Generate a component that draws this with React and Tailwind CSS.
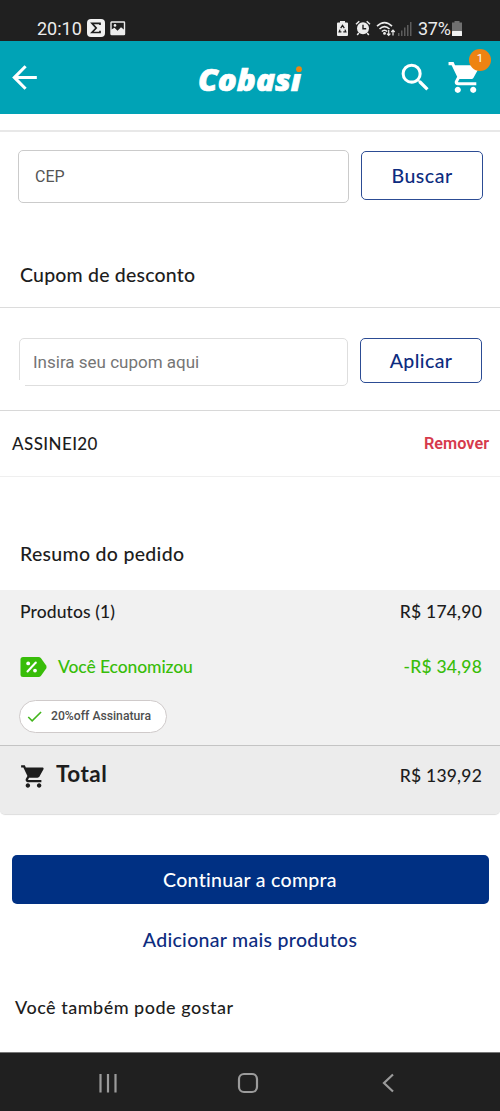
import React, { useState } from 'react';
import { MdArrowBack, MdCheck, MdSearch } from 'react-icons/md';

const inputClass = 'block w-full bg-transparent font-[Roboto,sans-serif] outline-none';
const outlineButton =
  'flex items-center justify-center rounded-[5px] border border-[#2c4c94] text-[19.5px] font-medium text-[#0d2c80]';

function CartIcon({ className }) {
  return (
    <svg className={className} viewBox="0 0 24 24" fill="currentColor">
      <path d="M7 18c-1.1 0-1.99.9-1.99 2S5.9 22 7 22s2-.9 2-2-.9-2-2-2zM1 2v2h2l3.6 7.59-1.35 2.45c-.16.28-.25.61-.25.96 0 1.1.9 2 2 2h12v-2H7.42c-.14 0-.25-.11-.25-.25l.03-.12.9-1.63h7.45c.75 0 1.41-.41 1.75-1.03l3.58-6.49c.08-.14.12-.31.12-.48 0-.55-.45-1-1-1H5.21l-.94-2H1zm16 16c-1.1 0-1.99.9-1.99 2s.89 2 1.99 2 2-.9 2-2-.9-2-2-2z" />
    </svg>
  );
}

function StatusBar() {
  return (
    <div className="flex h-[41px] items-end justify-between bg-[#202020] pr-9 pl-9 font-[Roboto,sans-serif] text-[#ececec]">
      <div className="flex h-[26px] items-center">
        <span className="w-[45px] pt-0.5 pl-px text-[18px] leading-none">20:10</span>
        <svg className="mb-px ml-1.5" width="18" height="18" viewBox="0 0 18 18">
          <rect width="18" height="18" rx="4" fill="#f2f2f2" />
          <path d="M13 6V4.3H5L9.2 9L5 13.5H13V11.8" fill="none" stroke="#202020" strokeWidth="1.7" />
        </svg>
        <svg className="ml-[5px]" width="16" height="15" viewBox="0 0 16 15">
          <rect x="1" y="1" width="13.5" height="12.5" rx="0.5" fill="none" stroke="#ececec" strokeWidth="1.4" />
          <path d="M1 8.8L4.5 6.8L7.5 9.8L11 6.2L14.5 9V14H1Z" fill="#ececec" />
          <circle cx="5" cy="4.4" r="1.3" fill="#ececec" />
        </svg>
      </div>
      <div className="flex h-[26px] items-center">
        <svg width="11" height="15" viewBox="0 0 11 15">
          <path d="M3 0H8V1.6H10Q11 1.6 11 2.6V14Q11 15 10 15H1Q0 15 0 14V2.6Q0 1.6 1 1.6H3Z" fill="#ececec" />
          <path d="M3.7 7.2L5.5 4.5L7.3 7.2M8 8.6L8.8 10.8H6.3M4.4 10.8H2.2L3 8.6" fill="none" stroke="#202020" strokeWidth="1.3" />
        </svg>
        <svg className="ml-[7px]" width="16" height="16" viewBox="0 0 16 16">
          <path d="M1 4.2L4.3 1.2M11.7 1.2L15 4.2M3.8 13L2.2 15M12.2 13L13.8 15" stroke="#ececec" strokeWidth="1.5" />
          <circle cx="8" cy="8.3" r="6" fill="#ececec" />
          <path d="M8 4.8V8.7H11.2" fill="none" stroke="#202020" strokeWidth="1.4" />
        </svg>
        <svg className="mt-px ml-[5px]" width="21" height="16" viewBox="0 0 21 16" fill="none" stroke="#ececec">
          <path d="M1 5.2Q8.5 -2 16 5.2M3.5 8Q8.5 3.3 13.5 8M5.8 10.5Q8.5 8 11.2 10.5" strokeWidth="1.6" />
          <circle cx="8.5" cy="12.4" r="1.4" fill="#ececec" stroke="none" />
          <path d="M12.7 9V14M11 12.6L12.7 14.4L14.4 12.6M17 14.5V9.5M15.3 11L17 9.2L18.7 11" strokeWidth="1.2" />
        </svg>
        <svg className="mt-0.5 ml-px" width="14" height="14" viewBox="0 0 14 14" fill="#5d5d5d">
          <rect x="0" y="11" width="1.5" height="3" />
          <rect x="3" y="8.5" width="1.5" height="5.5" />
          <rect x="6" y="5.5" width="1.5" height="8.5" />
          <rect x="9" y="3" width="1.5" height="11" />
          <rect x="12" y="0" width="1.5" height="14" />
        </svg>
        <span className="ml-[6px] w-[34px] pt-0.5 text-[18px] leading-none tracking-[-0.3px]">37%</span>
        <svg width="10" height="15" viewBox="0 0 10 15">
          <path d="M2.5 0H7.5V1.6H10V15H0V1.6H2.5Z" fill="#707070" />
          <rect y="10" width="10" height="5" rx="0.5" fill="#f2f2f2" />
        </svg>
        <span className="w-[2px]" />
      </div>
    </div>
  );
}

function Logo() {
  return (
    <svg width="110" height="56" viewBox="0 0 110 56">
      <text
        x="2"
        y="41"
        fill="#fff"
        stroke="#fff"
        strokeWidth="0.7"
        fontFamily="'Open Sans', sans-serif"
        fontSize="29.5"
        fontWeight="800"
        fontStyle="italic"
        textLength="103"
        lengthAdjust="spacingAndGlyphs"
      >
        Cobasi
      </text>
      <rect x="97" y="14" width="12" height="9.8" fill="#00a3b6" />
      <circle cx="103" cy="19.2" r="2.9" fill="#ef860f" />
    </svg>
  );
}

function Header() {
  return (
    <header className="flex h-[73px] items-center bg-[#00a3b6] pr-4 pl-1.5 text-white">
      <MdArrowBack className="h-[37px] w-[37px]" />
      <div className="ml-[153px]">
        <Logo />
      </div>
      <MdSearch className="ml-[91px] h-[37px] w-[37px]" />
      <div className="relative ml-[13px]">
        <CartIcon className="h-[37px] w-[37px]" />
        <span className="absolute -top-[10px] left-[22px] flex h-[22px] w-[22px] items-center justify-center rounded-full bg-[#ee8312] pb-0.5 font-[Roboto,sans-serif] text-[11.5px] leading-none">
          1
        </span>
      </div>
    </header>
  );
}

function DiscountTag() {
  return (
    <svg width="28" height="20" viewBox="0 0 28 20">
      <path
        d="M3 0H18.5Q20 0 21 1.2L26.2 8.6Q27 10 26.2 11.4L21 18.8Q20 20 18.5 20H3Q0.5 20 0.5 17.5V2.5Q0.5 0 3 0Z"
        fill="#38bd09"
      />
      <path d="M7.5 14.5L15.8 5.5" stroke="#fff" strokeWidth="2" strokeLinecap="round" />
      <circle cx="8.2" cy="6.4" r="1.9" fill="#fff" />
      <circle cx="15" cy="13.6" r="1.9" fill="#fff" />
    </svg>
  );
}

function NavBar() {
  return (
    <nav className="h-[59px] border-t border-[#777] bg-[#202020]">
      <svg width="500" height="58" viewBox="0 0 500 58" fill="none" stroke="#9b9b9b" strokeWidth="2.2">
        <path d="M100.5 21V39.5M108 21V39.5M115.5 21V39.5" />
        <rect x="239" y="21" width="18" height="18" rx="5" />
        <path d="M393 21.5L384 30L393 38.5" />
      </svg>
    </nav>
  );
}

export default function App() {
  const [cep, setCep] = useState('');
  const [coupon, setCoupon] = useState('');

  return (
    <div className="flex h-[1111px] w-[500px] flex-col overflow-hidden bg-white font-[Lato,sans-serif] text-[#1d1d1d]">
      <StatusBar />
      <Header />
      <main className="flex-1">
        <div className="h-[18px] border-b-2 border-[#e8e8e8]" />

        <section className="flex items-start gap-3 pt-[18px] pr-[17px] pl-[18px]">
          <div className="flex h-[53px] w-[331px] items-center rounded-[5px] border border-[#cbcbcb] px-4">
            <input
              className={`${inputClass} text-[16px] placeholder:text-[#555]`}
              placeholder="CEP"
              value={cep}
              onChange={(e) => setCep(e.target.value)}
            />
          </div>
          <button className={`${outlineButton} mt-px h-[49px] w-[122px] tracking-[0.5px]`}>Buscar</button>
        </section>

        <h2 className="flex h-[105px] items-end border-b border-[#dcdcdc] pb-[19px] pl-5 text-[19.5px] leading-[26px] font-medium tracking-[0.2px]">
          Cupom de desconto
        </h2>

        <section className="flex h-[103px] items-start gap-3 border-b border-[#d8d8d8] pt-[30px] pl-[19px]">
          <div className="relative flex h-[48px] w-[329px] items-center rounded-[5px] border border-[#dedede] px-[13px] pt-0.5">
            <input
              className={`${inputClass} text-[17px] placeholder:text-[#757575]`}
              placeholder="Insira seu cupom aqui"
              value={coupon}
              onChange={(e) => setCoupon(e.target.value)}
            />
            <span className="absolute -bottom-px -left-px h-[6px] w-[6px] bg-white" />
          </div>
          <button className={`${outlineButton} h-[45px] w-[122px] tracking-[0.4px]`}>Aplicar</button>
        </section>

        <div className="flex h-[66px] items-center justify-between border-b border-[#efefef] pr-[11px] pl-3">
          <span className="text-[17px] font-medium tracking-[0.4px]">ASSINEI20</span>
          <button className="pt-0.5 font-[Roboto,sans-serif] text-[16.3px] font-semibold text-[#d63a4c]">Remover</button>
        </div>

        <h2 className="flex h-[113px] items-end pb-[23px] pl-5 text-[19.5px] leading-[26px] font-medium tracking-[0.3px]">
          Resumo do pedido
        </h2>

        <section className="h-[224px] rounded-b-[5px] bg-[#f1f1f1] text-[17.5px] font-medium shadow-[0_1px_1px_#ddd]">
          <div className="flex h-[155px] flex-col pr-[18px] pl-5">
            <div className="flex h-[43px] items-center justify-between pt-px">
              <span className="tracking-[0.1px]">Produtos (1)</span>
              <span className="tracking-[0.2px]">R$ 174,90</span>
            </div>
            <div className="mt-3 flex h-[43px] items-center text-[#38bd09]">
              <DiscountTag />
              <span className="ml-[10px] flex-1 pt-px tracking-[-0.1px]">Você Economizou</span>
              <span className="pt-0.5 tracking-[0.2px]">-R$ 34,98</span>
            </div>
            <div className="-ml-px mt-3 flex h-[33px] w-[148px] shrink-0 items-center rounded-full border border-[#cfcaca] bg-white pl-[5px] font-[Roboto,sans-serif] text-[12.2px] text-[#4e4e4e]">
              <MdCheck className="h-[19px] w-[19px] text-[#42b51c]" />
              <span className="ml-[7px] whitespace-nowrap">20%off Assinatura</span>
            </div>
          </div>
          <div className="flex h-[69px] items-start rounded-b-[5px] border-t border-[#c4c4c4] bg-[#ececec] pt-4 pr-[18px] pl-5">
            <CartIcon className="mt-px h-[27px] w-[27px]" />
            <span className="-mt-px ml-[9px] flex-1 text-[22.5px] leading-[26px] font-bold tracking-[0.5px]">Total</span>
            <span className="mt-px leading-[26px] tracking-[0.2px]">R$ 139,92</span>
          </div>
        </section>

        <div className="flex flex-col items-center px-[11.5px] pt-[41px]">
          <button className="h-[49px] w-full rounded-[5px] bg-[#003083] text-[19.5px] font-medium tracking-[0.3px] text-white">
            Continuar a compra
          </button>
          <button className="mt-[23px] text-[19.5px] leading-[26px] font-medium tracking-[0.3px] text-[#0d2c80]">
            Adicionar mais produtos
          </button>
        </div>

        <h3 className="mt-[41px] pl-[15px] text-[18px] leading-[26px] font-medium tracking-[0.5px]">
          Você também pode gostar
        </h3>
      </main>
      <NavBar />
    </div>
  );
}
